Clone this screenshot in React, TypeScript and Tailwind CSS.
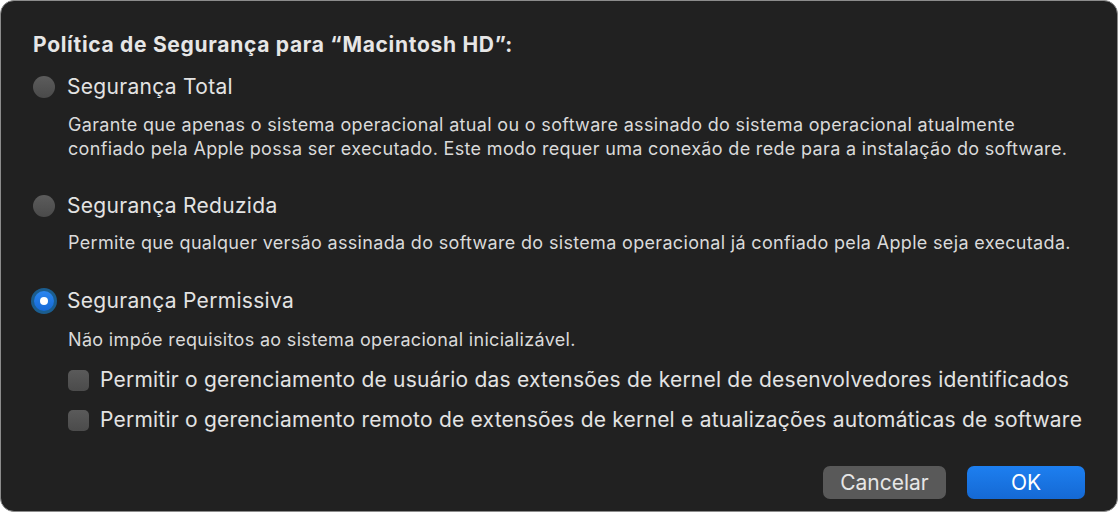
import React from 'react'

const font = { fontFamily: 'Inter, "Noto Sans", sans-serif' }

function Radio({ checked }: { checked?: boolean }) {
  if (checked) {
    return (
      <span className="-ml-[2px] -mr-[2px] flex h-[26px] w-[26px] shrink-0 items-center justify-center rounded-full bg-[#1b5d8f]">
        <span className="flex h-[20px] w-[20px] items-center justify-center rounded-full bg-gradient-to-b from-[#2a86f0] to-[#1669d6]">
          <span className="h-[8px] w-[8px] rounded-full bg-white" />
        </span>
      </span>
    )
  }
  return <span className="h-[22px] w-[22px] shrink-0 rounded-full bg-gradient-to-b from-[#5c5c5c] to-[#4a4a4a]" />
}

function Checkbox() {
  return <span className="h-[21px] w-[21px] shrink-0 rounded-[5px] bg-gradient-to-b from-[#5a5a5a] to-[#4b4b4b]" />
}

function Option({ label, checked, desc }: { label: string; checked?: boolean; desc: React.ReactNode }) {
  return (
    <div>
      <div className="flex h-[24px] items-center gap-[12px]">
        <Radio checked={checked} />
        <span className="text-[21px] tracking-[0.3px] text-[#e3e3e3]">{label}</span>
      </div>
      <div className="pl-[35px] text-[18px] leading-[24px] tracking-[0.33px] text-[#dadada]">{desc}</div>
    </div>
  )
}

export default function App() {
  return (
    <div className="h-[513px] w-[1120px] bg-white" style={font}>
      <div className="flex h-[512px] w-[1118px] flex-col rounded-[14px] border border-[#8c8c8c] bg-[#212121] pl-[32px] pr-[32px] pt-[32px]">
        <div className="h-[24px] whitespace-nowrap text-[21px] font-bold leading-[24px] tracking-[0.7px] text-[#e6e6e6]">
          Política de Segurança para “Macintosh HD”:
        </div>
        <div className="mt-[18px]">
          <Option
            label="Segurança Total"
            desc={
              <div className="mt-[14px] whitespace-nowrap">
                Garante que apenas o sistema operacional atual ou o software assinado do sistema operacional atualmente
                <br />
                confiado pela Apple possa ser executado. Este modo requer uma conexão de rede para a instalação do software.
              </div>
            }
          />
        </div>
        <div className="mt-[33px]">
          <Option
            label="Segurança Reduzida"
            desc={
              <div className="mt-[13px] whitespace-nowrap">
                Permite que qualquer versão assinada do software do sistema operacional já confiado pela Apple seja executada.
              </div>
            }
          />
        </div>
        <div className="mt-[34px]">
          <Option
            label="Segurança Permissiva"
            checked
            desc={<div className="mt-[15px] whitespace-nowrap">Não impõe requisitos ao sistema operacional inicializável.</div>}
          />
        </div>
        <div className="mt-[16px] flex flex-col gap-[16px] pl-[35px]">
          {[
            'Permitir o gerenciamento de usuário das extensões de kernel de desenvolvedores identificados',
            'Permitir o gerenciamento remoto de extensões de kernel e atualizações automáticas de software',
          ].map((t) => (
            <div key={t} className="flex h-[24px] items-center gap-[11px]">
              <Checkbox />
              <span className="whitespace-nowrap text-[21px] tracking-[0.22px] text-[#e3e3e3]">{t}</span>
            </div>
          ))}
        </div>
        <div className="mb-[12px] mt-auto flex justify-end gap-[21px]">
          <button className="h-[33px] w-[123px] rounded-[7px] bg-[#595959] text-[21px] text-[#e6e6e6]">Cancelar</button>
          <button className="h-[33px] w-[118px] rounded-[7px] bg-gradient-to-b from-[#1d7ff0] to-[#1569d4] text-[21px] text-white">
            OK
          </button>
        </div>
      </div>
    </div>
  )
}
